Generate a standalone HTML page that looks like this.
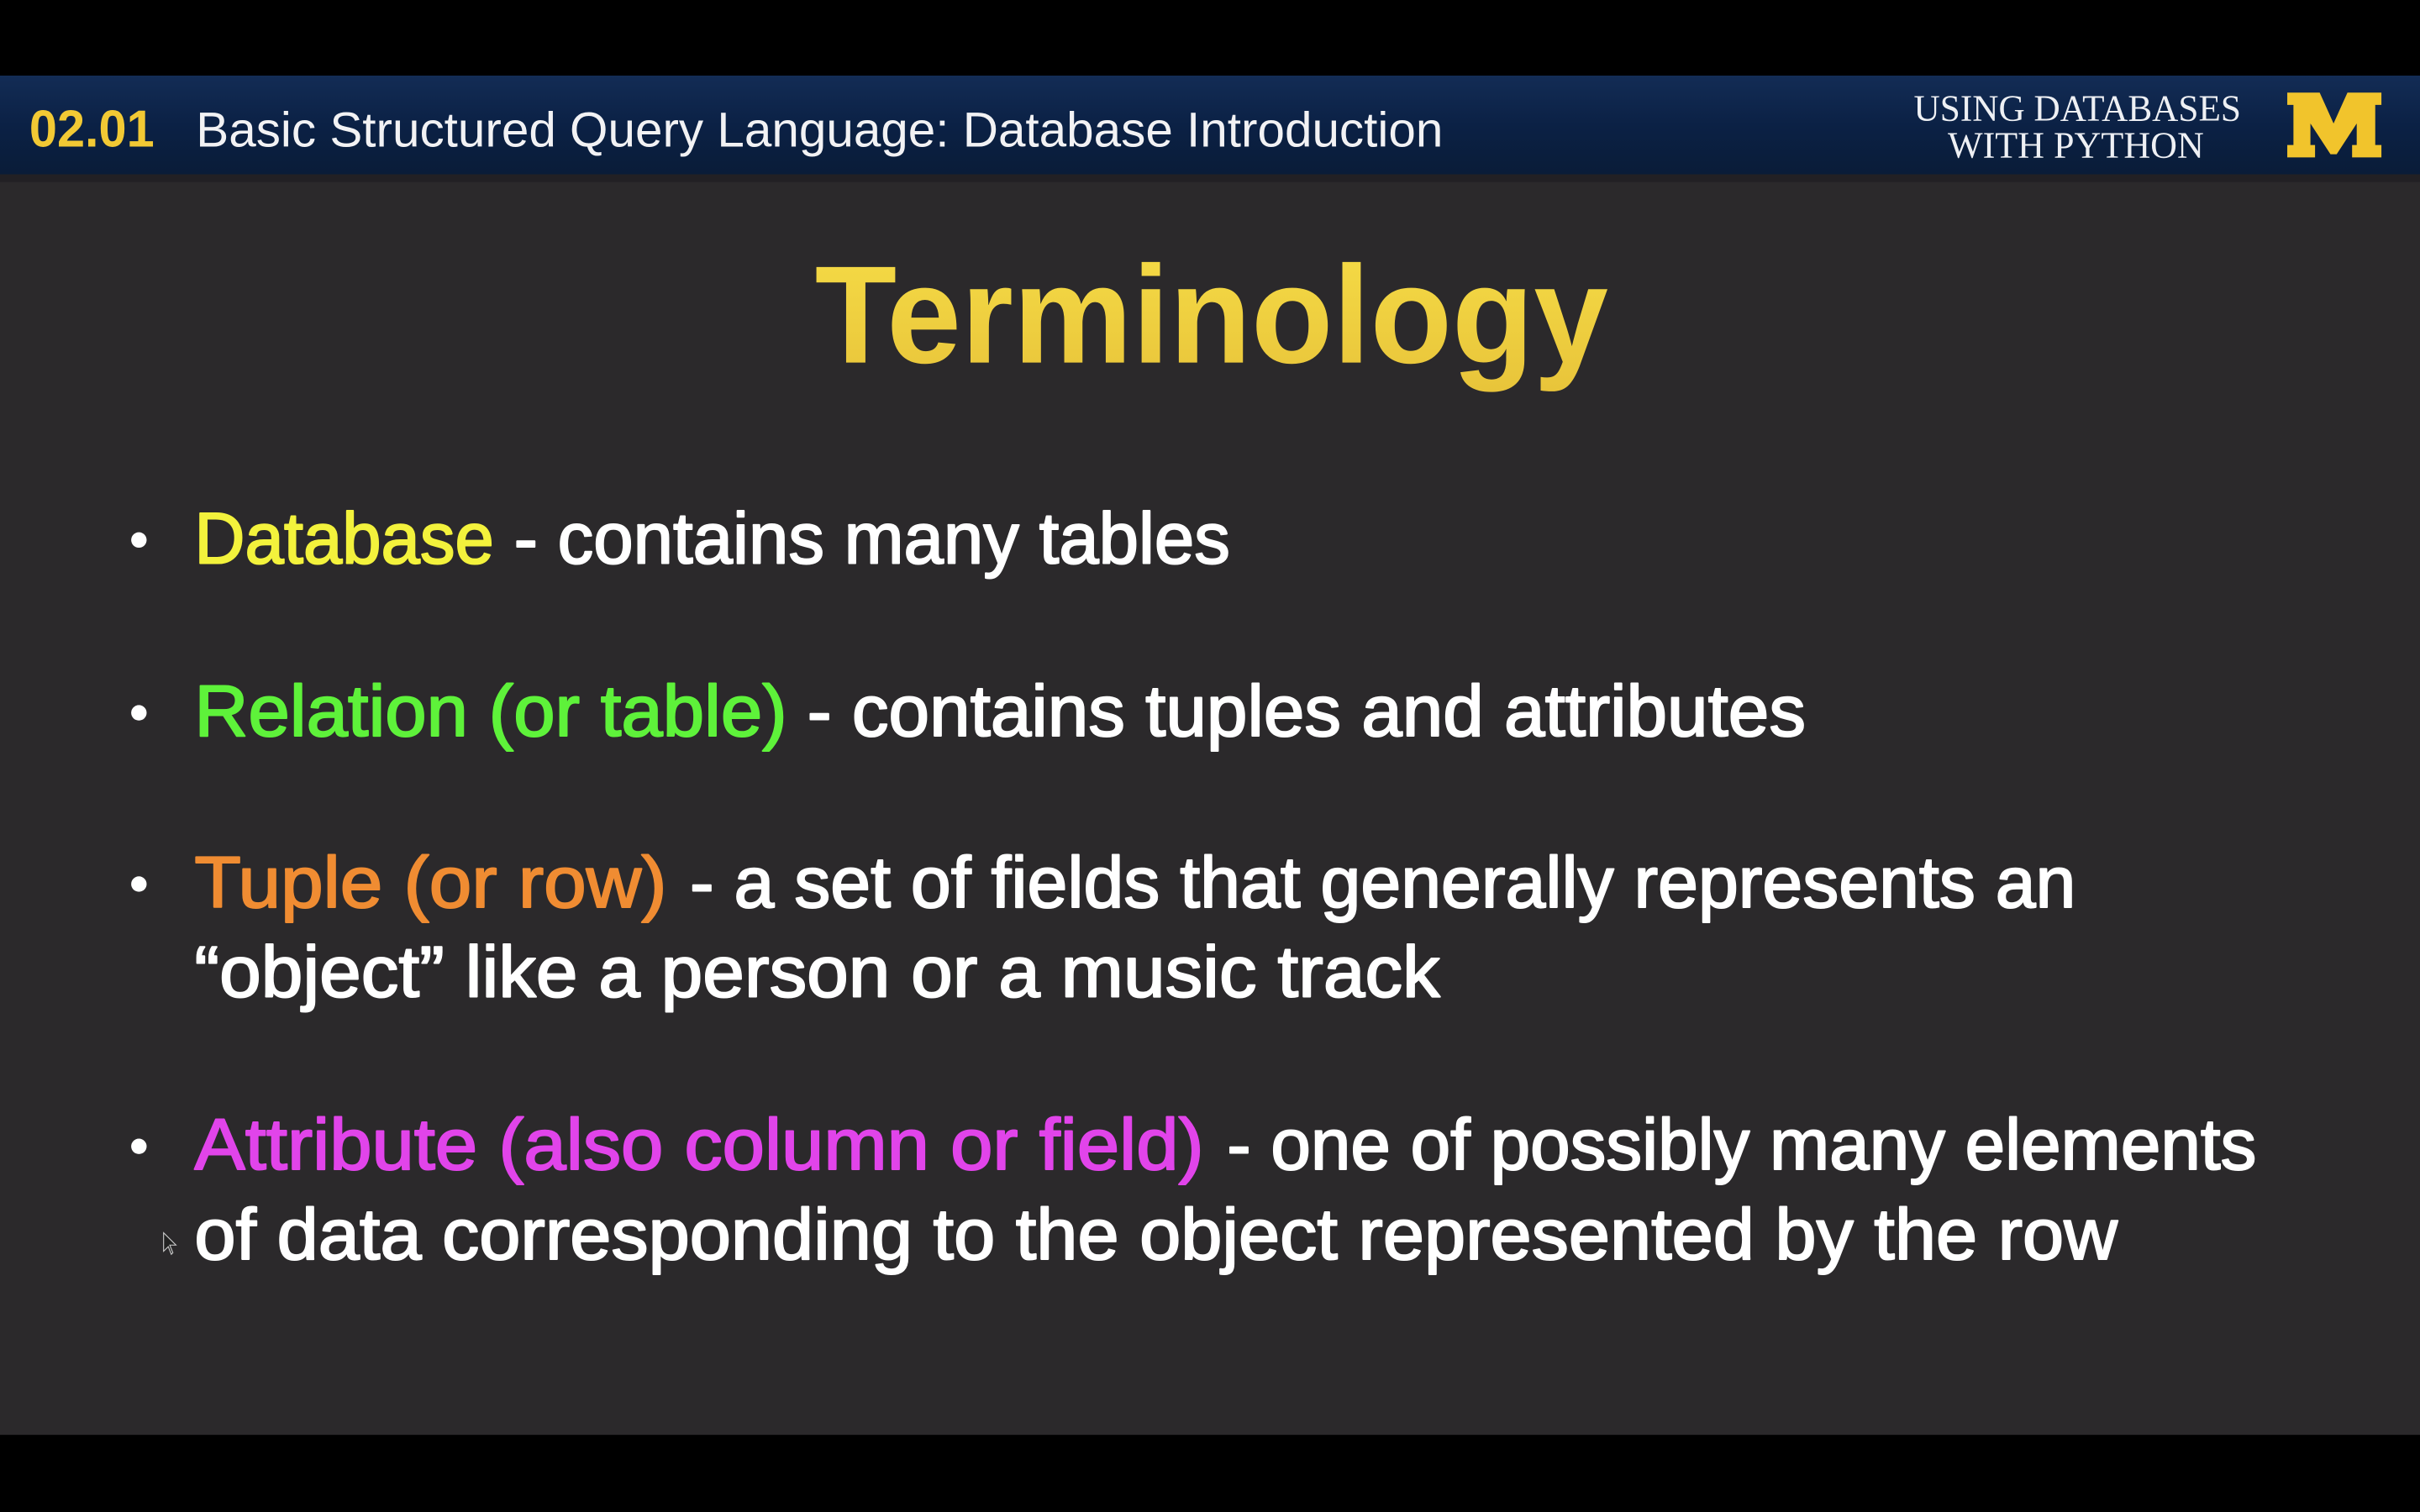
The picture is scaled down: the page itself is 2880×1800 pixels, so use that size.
<!DOCTYPE html>
<html><head><meta charset="utf-8"><style>
html,body{margin:0;padding:0;background:#000;width:2880px;height:1800px;overflow:hidden}
svg{display:block}
</style></head><body>
<svg width="2880" height="1800" viewBox="0 0 1568 980" xmlns="http://www.w3.org/2000/svg">
<defs>
<linearGradient id="hd" x1="0" y1="0" x2="0" y2="1">
<stop offset="0" stop-color="#132c55"/><stop offset="0.5" stop-color="#0b2145"/><stop offset="1" stop-color="#0a1c38"/>
</linearGradient>
<linearGradient id="tt" x1="0" y1="0" x2="0" y2="1">
<stop offset="0" stop-color="#f6dc46"/><stop offset="1" stop-color="#e8c43a"/>
</linearGradient>
</defs>
<rect x="0" y="0" width="1568" height="980" fill="#000"/>
<rect x="0" y="113" width="1568" height="817" fill="#2b292b"/>
<rect x="0" y="49" width="1568" height="64" fill="url(#hd)"/>
<rect x="0" y="113" width="1568" height="5" fill="#222024"/>
<g font-family="Liberation Sans, sans-serif">
<text x="19" y="95" font-size="34" font-weight="bold" fill="#f2c934" textLength="81" lengthAdjust="spacingAndGlyphs">02.01</text>
<text x="127" y="95" font-size="32" fill="#f2f2f4" textLength="808" lengthAdjust="spacingAndGlyphs">Basic Structured Query Language: Database Introduction</text>
</g>
<g font-family="Liberation Serif, serif" fill="#eef0f4" font-size="24">
<text x="1240" y="78" textLength="212" lengthAdjust="spacingAndGlyphs">USING DATABASES</text>
<text x="1262" y="102" textLength="166" lengthAdjust="spacingAndGlyphs">WITH PYTHON</text>
</g>
<path d="M1482 60 H1503 L1512 80 L1521 60 H1543 V68 H1539 V94 H1543 V102 H1524 V94 H1527 V80 L1514 100 H1510 L1497 80 V94 H1500 V102 H1482 V94 H1486 V68 H1482 Z" fill="#f1c42c"/>
<g font-family="Liberation Sans, sans-serif">
<text x="528" y="235" font-size="90" font-weight="bold" fill="url(#tt)" textLength="514" lengthAdjust="spacingAndGlyphs">Terminology</text>
<g font-size="47" stroke-width="1.1" stroke-linejoin="round">
<text x="126" y="365" fill="#f3f23c" stroke="#f3f23c" textLength="194" lengthAdjust="spacingAndGlyphs">Database</text>
<text x="333" y="365" fill="#fff" stroke="#fff" textLength="464" lengthAdjust="spacingAndGlyphs">- contains many tables</text>
<text x="126" y="477" fill="#5ef23a" stroke="#5ef23a" textLength="384" lengthAdjust="spacingAndGlyphs">Relation (or table)</text>
<text x="523" y="477" fill="#fff" stroke="#fff" textLength="647" lengthAdjust="spacingAndGlyphs">- contains tuples and attributes</text>
<text x="126" y="588" fill="#f08c32" stroke="#f08c32" textLength="306" lengthAdjust="spacingAndGlyphs">Tuple (or row)</text>
<text x="447" y="588" fill="#fff" stroke="#fff" textLength="898" lengthAdjust="spacingAndGlyphs">- a set of fields that generally represents an</text>
<text x="126" y="646" fill="#fff" stroke="#fff" textLength="807" lengthAdjust="spacingAndGlyphs">“object” like a person or a music track</text>
<text x="126" y="758" fill="#e144ea" stroke="#e144ea" textLength="654" lengthAdjust="spacingAndGlyphs">Attribute (also column or field)</text>
<text x="795" y="758" fill="#fff" stroke="#fff" textLength="667" lengthAdjust="spacingAndGlyphs">- one of possibly many elements</text>
<text x="126" y="816" fill="#fff" stroke="#fff" textLength="1246" lengthAdjust="spacingAndGlyphs">of data corresponding to the object represented by the row</text>
</g>
</g>
<g fill="#fff">
<circle cx="90" cy="350" r="5"/>
<circle cx="90" cy="462" r="5"/>
<circle cx="90" cy="573" r="5"/>
<circle cx="90" cy="743" r="5"/>
</g>
<path d="M106 799 L106 811 L109 808 L111 813 L112 812 L110 807 L114 807 Z" fill="#222" stroke="#ccc" stroke-width="0.6"/>
</svg>
</body></html>
